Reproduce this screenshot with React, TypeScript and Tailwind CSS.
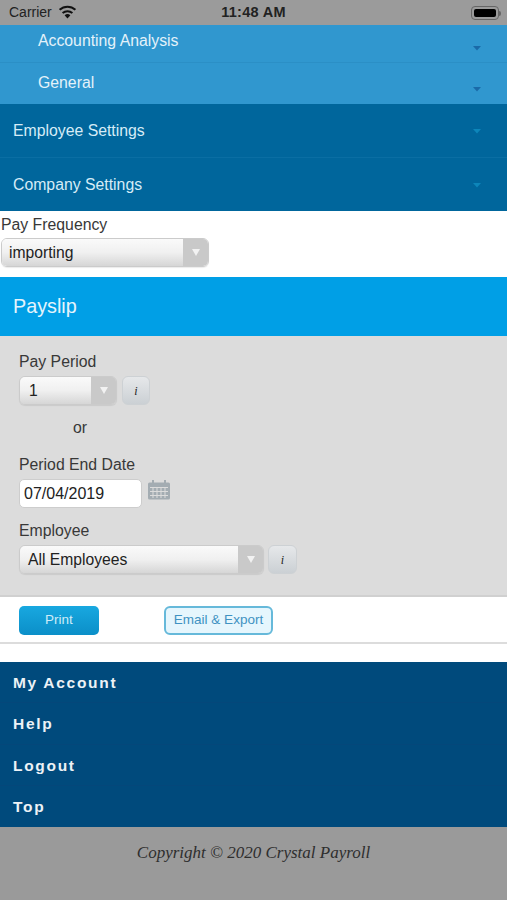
import type { ReactNode } from 'react';

const SANS = "font-['Liberation_Sans',Arial,sans-serif]";

function Caret({ className }: { className: string }) {
  return (
    <svg width="10" height="6" viewBox="0 0 10 6" className={className} aria-hidden="true">
      <polygon points="1,1 9,1 5,5.5" fill="currentColor" />
    </svg>
  );
}

function SubRow({ label, h, pt, caretMt, border }: { label: string; h: string; pt: string; caretMt: string; border?: boolean }) {
  return (
    <div className={`${h} flex justify-between pl-[38px] pr-[25px] ${border ? 'border-b border-[#2b8fc6]' : ''}`}>
      <span className={`text-[15.8px] leading-[18px] ${pt} text-[#e4f2fa]`}>{label}</span>
      <Caret className={`${caretMt} text-[#1a6aa8]`} />
    </div>
  );
}

function MainRow({ label, h, border }: { label: string; h: string; border?: boolean }) {
  return (
    <div className={`${h} flex items-center justify-between pl-[13px] pr-[25px] ${border ? 'border-b border-[#0a6ea3]' : ''}`}>
      <span className="text-[15.8px] text-[#d6ecf7]">{label}</span>
      <Caret className="text-[#0d86ba]" />
    </div>
  );
}

function Select({ value, w, pl }: { value: string; w: string; pl: string }) {
  return (
    <div className={`${w} h-[29px] flex rounded-[6px] border border-[#cbcbcb] overflow-hidden shadow-[0_1px_1px_rgba(0,0,0,0.08)]`}>
      <div className={`flex-1 ${pl} flex items-center text-[15.7px] text-[#222] bg-gradient-to-b from-[#fafafa] via-[#f0f0f0] to-[#d6d6d6]`}>
        {value}
      </div>
      <div className="w-[25px] flex items-center justify-center bg-[#c9c9c9]">
        <svg width="8" height="7" viewBox="0 0 8 7" aria-hidden="true">
          <polygon points="0,0 8,0 4,7" fill="#f2f2f2" />
        </svg>
      </div>
    </div>
  );
}

function InfoButton({ w }: { w: string }) {
  return (
    <div className={`${w} h-[29px] flex items-center justify-center rounded-[6px] border border-[#cdd1d4] bg-gradient-to-b from-[#e6e8ea] to-[#cbd0d4] font-['Liberation_Serif',serif] italic text-[12px] text-[#222]`}>
      i
    </div>
  );
}

function Label({ children }: { children: ReactNode }) {
  return <div className="text-[15.8px] leading-[18px] text-[#383838]">{children}</div>;
}

function NavRow({ label, border }: { label: string; border?: boolean }) {
  return (
    <div className={`h-[41.25px] flex items-center pl-[13px] pt-[1px] text-[15.5px] font-bold tracking-[1.7px] text-[#edf2f6] ${border ? 'border-b border-[#04477a]' : ''}`}>
      {label}
    </div>
  );
}

export default function App() {
  return (
    <div className={`w-[507px] h-[900px] overflow-hidden bg-white ${SANS}`}>
      {/* status bar */}
      <div className="h-[25px] bg-[#9b9b9b] relative flex items-center pl-[9px] text-[#222]">
        <span className="text-[14px]">Carrier</span>
        <svg width="19" height="14" viewBox="0 0 19 14" className="ml-[6px] mb-[1px]" aria-hidden="true">
          <path d="M9.5 13.5 L6.6 10.2 A4.4 4.4 0 0 1 12.4 10.2 Z" fill="#111" />
          <path d="M4.6 8 A7.4 7.4 0 0 1 14.4 8" fill="none" stroke="#111" strokeWidth="2" />
          <path d="M1.6 4.8 A11.6 11.6 0 0 1 17.4 4.8" fill="none" stroke="#111" strokeWidth="2" />
        </svg>
        <span className="absolute left-0 right-0 text-center text-[14.5px] font-bold tracking-[0.3px]">11:48 AM</span>
        <div className="absolute left-[471px] top-[6px] flex items-center">
          <div className="w-[28px] h-[14px] rounded-[4px] border border-[#666] p-[2px]">
            <div className="w-full h-full rounded-[2px] bg-black" />
          </div>
          <div className="w-[1.5px] h-[5px] bg-[#666] rounded-r" />
        </div>
      </div>

      {/* accordion */}
      <div className="bg-[#3097cf]">
        <SubRow label="Accounting Analysis" h="h-[38px]" pt="pt-[7px]" caretMt="mt-[20px]" border />
        <SubRow label="General" h="h-[41px]" pt="pt-[11px]" caretMt="mt-[23px]" />
      </div>
      <div className="bg-[#00669c]">
        <MainRow label="Employee Settings" h="h-[54px]" border />
        <MainRow label="Company Settings" h="h-[53px]" />
      </div>

      {/* pay frequency */}
      <div className="h-[66px] pl-[1px] pt-[5px]">
        <Label>Pay Frequency</Label>
        <div className="mt-[4px]">
          <Select value="importing" w="w-[208px]" pl="pl-[7px]" />
        </div>
      </div>

      <div className="h-[59px] bg-[#009fe6] flex items-center pl-[13px] text-[19.8px] text-[#e4f4fc]">Payslip</div>

      {/* payslip form */}
      <div className="h-[261px] bg-[#dcdcdc] pl-[19px] pt-[17px] border-b-2 border-[#d0d0d0]">
        <Label>Pay Period</Label>
        <div className="mt-[5px] flex gap-[5px]">
          <Select value="1" w="w-[98px]" pl="pl-[9px]" />
          <InfoButton w="w-[28px]" />
        </div>
        <div className="mt-[14px] pl-[54px]">
          <Label>or</Label>
        </div>
        <div className="mt-[19px]">
          <Label>Period End Date</Label>
        </div>
        <div className="mt-[5px] flex items-center gap-[6px]">
          <div className="w-[123px] h-[29px] rounded-[5px] border border-[#cdcdcd] bg-white pl-[4px] flex items-center text-[16px] text-[#222]">
            07/04/2019
          </div>
          <svg width="22" height="20" viewBox="0 0 22 20" className="mb-[7px]" aria-hidden="true">
            <rect x="0" y="2.5" width="22" height="17" rx="1.5" fill="#a3acb2" />
            <rect x="4" y="0" width="2" height="5" fill="#a3acb2" />
            <rect x="16" y="0" width="2" height="5" fill="#a3acb2" />
            <path d="M2 7.5H20M2 11.5H20M2 15.5H20M5 7V18M9 7V18M13 7V18M17 7V18" stroke="#dcdcdc" strokeWidth="1" />
          </svg>
        </div>
        <div className="mt-[14px]">
          <Label>Employee</Label>
        </div>
        <div className="mt-[5px] flex gap-[4px]">
          <Select value="All Employees" w="w-[245px]" pl="pl-[8px]" />
          <InfoButton w="w-[29px]" />
        </div>
      </div>

      {/* actions */}
      <div className="h-[47px] border-b-2 border-[#dcdcdc] pl-[19px] pt-[9px] flex items-start">
        <div className="w-[80px] h-[29px] rounded-[5px] bg-gradient-to-b from-[#18a8e0] to-[#0b8fc8] flex items-center justify-center text-[13.5px] text-[#cfecf8]">
          Print
        </div>
        <div className="ml-[65px] w-[109px] h-[29px] rounded-[6px] border-2 border-[#66b9da] bg-[#e6f6fd] flex items-center justify-center text-[13.5px] text-[#3f92c2]">
          Email &amp; Export
        </div>
      </div>
      <div className="h-[18px] bg-white" />

      {/* bottom nav */}
      <div className="h-[165px] bg-[#004a7c]">
        <NavRow label="My Account" border />
        <NavRow label="Help" border />
        <NavRow label="Logout" border />
        <NavRow label="Top" />
      </div>

      <div className="h-[73px] bg-[#9a9a9a] pt-[16px] text-center font-['Liberation_Serif',serif] italic text-[17px] leading-[20px] text-[#2e2e2e]">
        Copyright © 2020 Crystal Payroll
      </div>
    </div>
  );
}
